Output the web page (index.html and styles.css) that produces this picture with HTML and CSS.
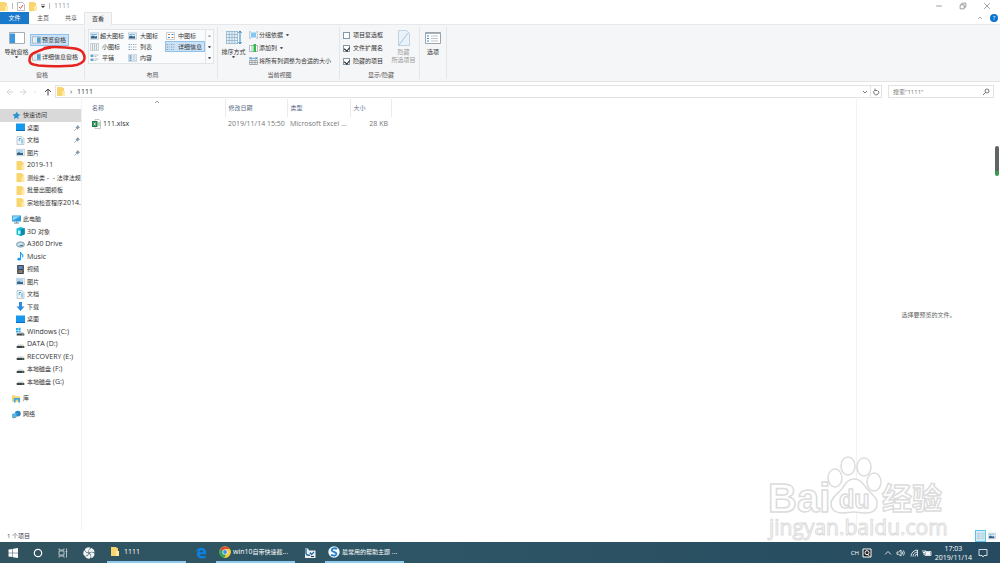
FILE: index.html
```html
<!DOCTYPE html>
<html lang="zh-CN">
<head>
<meta charset="utf-8">
<title>1111</title>
<link rel="stylesheet" href="styles.css">
</head>
<body>
<svg class="defs" aria-hidden="true">
  <symbol id="folder" viewBox="0 0 8 9"><path d="M0 0h5l1 1h1v8H0z" fill="#f9d56f"/><path d="M5 4h3v5H5z" fill="#ffe9a6"/></symbol>
  <symbol id="star" viewBox="0 0 10 10"><path d="M5.500.5l1 2.700 3 .8-2.500 1.800.3 3.200L5 7.400 2 9l.8-3L.5 4l3.200-.6z" fill="#2b93d6"/></symbol>
  <symbol id="desktop" viewBox="0 0 9 8"><path d="M0 0h9v7.500H0z" fill="#1698ee"/><path d="M0 6.500h9v1H0z" fill="#0d6fc0"/></symbol>
  <symbol id="doc" viewBox="0 0 9 9"><path d="M1 .5h5l2 2v6H1z" fill="#eef3f7" stroke="#9fb0bd" stroke-width=".6"/><path d="M3 2.500h2l1 1v4M3.200 3v2" fill="none" stroke="#4aa7d8"/></symbol>
  <symbol id="pic" viewBox="0 0 9 8"><path d="M.3.8h8.400v6.400H.3z" fill="#e4eff7" stroke="#a9b9c6" stroke-width=".6"/><path d="M1 4.500l2-1 2 1 2-.5v2.500H1z" fill="#36648c"/><path d="M1 2h6v1H1z" fill="#77bdea"/></symbol>
  <symbol id="pc" viewBox="0 0 9 9"><path d="M0 .5h9v6H0z" fill="#2b9ce0"/><path d="M.7 1.200h7.600L.7 5.800z" fill="#8bd3f8"/><path d="M2 8h5M4.500 6.500V8" stroke="#6d8796"/></symbol>
  <symbol id="cube" viewBox="0 0 9 9"><path d="M.5 1.500l4-1.500 4.200 1.200v6L4.500 9l-4-1.500z" fill="#19bdd8"/><path d="M4.500 2.500l4.200-1.300v6L4.500 9z" fill="#078ba8"/><path d="M2 3.500h2.500v3.500H2z" fill="#c5f5f8"/></symbol>
  <symbol id="cloud" viewBox="0 0 9 8"><ellipse cx="4.500" cy="4" rx="4" ry="2.700" fill="#b8ccd8" stroke="#7797aa" stroke-width=".8"/><path d="M2 4.500q2-3 5-.5" fill="none" stroke="#f1f8fc"/><path d="M4 5.500l3-1" stroke="#237eaf"/></symbol>
  <symbol id="note" viewBox="0 0 9 10"><path d="M4.500 0v7.500M4.500.5q.5 2 2.500 2.800.5 1.500-.5 2.700" fill="none" stroke="#149aef" stroke-width="1.200"/><ellipse cx="3" cy="8" rx="2" ry="1.500" fill="#149aef"/></symbol>
  <symbol id="video" viewBox="0 0 9 9"><path d="M1 0h7v9H1z" fill="#39414c"/><path d="M2.500 1h4v3h-4z" fill="#5d8ac5"/><path d="M2.500 5h4v3h-4z" fill="#8a7b6c"/><path d="M1.700 0v9M7.300 0v9" stroke="#ddd" stroke-width=".5" stroke-dasharray=".7 .7"/></symbol>
  <symbol id="down" viewBox="0 0 9 9"><path d="M3 0h3v4.500h2.500l-4 4.500-4-4.500H3z" fill="#318bdb"/></symbol>
  <symbol id="disk" viewBox="0 0 9 9"><path d="M2 4.500h5L8.300 6H.7z" fill="#c9cdcf"/><path d="M.7 6h7.600v2H.7z" fill="#3c4244"/><path d="M6 7h1.500" stroke="#58c26a" stroke-width=".8"/></symbol>
  <symbol id="win" viewBox="0 0 9 9"><path d="M0 1h2v2H0zM2.400.7h2.200V3H2.400zM0 3.400h2v2H0zM2.400 3.400h2.200v2.200H2.400z" fill="#28aee8"/><path d="M3 5h4l1.300 1.500H1.500z" fill="#c9cdcf"/><path d="M.7 6.500h7.600v2H.7z" fill="#3c4244"/><path d="M6 7.500h1.500" stroke="#58c26a" stroke-width=".8"/></symbol>
  <symbol id="lib" viewBox="0 0 10 9"><path d="M0 1h3l1 1h5v6H0z" fill="#f8d371"/><path d="M2 4h7v5H7V6H4v3H2z" fill="#3ea9dc"/></symbol>
  <symbol id="net" viewBox="0 0 10 9"><circle cx="6.500" cy="3.500" r="3.300" fill="#2b87c3"/><path d="M0 4l5-1.500v4L0 8z" fill="#58b5e8"/><path d="M1 8.300L5 7" stroke="#3e6682"/></symbol>
  <symbol id="pin" viewBox="0 0 6 6"><path d="M3.500 0L6 2.500 4.800 3 3.500 4.500 1.500 2.500 3 1.200z" fill="#8499a8"/><path d="M2.500 3.500L.3 5.700" stroke="#8499a8" stroke-width=".8"/></symbol>
  <symbol id="pane" viewBox="0 0 9 8"><path d="M.4.9h8.200v6.200H.4z" fill="#fff" stroke="#8d99a1" stroke-width=".7"/><path d="M1.500 3h3M1.500 5h3" stroke="#9cb5c4" stroke-width=".6"/><path d="M5 1.300h3.200v5.400H5z" fill="#4ba0dc"/></symbol>
  <symbol id="navpane" viewBox="0 0 16 12"><path d="M.5.500h15v11H.5z" fill="#fff" stroke="#909ba2" stroke-width=".8"/><path d="M1 1.500h5v9.500H1z" fill="#3a98e0"/></symbol>
  <symbol id="grid" viewBox="0 0 9 8"><path d="M.5.500h8v7h-8z" fill="#eef1f3" stroke="#b0b9bf" stroke-width=".6"/><path d="M2 2h1M4 2h1M6 2h1M2 4h1M4 4h1M6 4h1M2 6h1M4 6h1M6 6h1" stroke="#6e8290" stroke-width=".8"/></symbol>
  <symbol id="list" viewBox="0 0 9 8"><path d="M.5 1.500h1.500M.5 4h1.500M.5 6.500h1.500M5 1.500h1M5 4h1M5 6.500h1" stroke="#7b9fba"/><path d="M2.500 1.500h1.500M2.500 4h1.500M2.500 6.500h1.500M6.500 1.500h2M6.500 4h2M6.500 6.500h2" stroke="#a6aeb4" stroke-width=".8"/></symbol>
  <symbol id="mid" viewBox="0 0 9 8"><path d="M.5.500h8v7h-8z" fill="#fff" stroke="#aab4bb" stroke-width=".6"/><path d="M2 2h2v1H2zM5.500 5h2v1h-2z" fill="#d57b3a"/><path d="M5.500 2h2v1h-2zM2 5h2v1H2z" fill="#3d80b7"/></symbol>
  <symbol id="tile" viewBox="0 0 9 8"><path d="M.5.500h3v2.500h-3zM.5 4.500h3V7h-3z" fill="#6ea3c9"/><path d="M4.500 1h4M4.500 2.500h2M4.500 5h4M4.500 6.500h2" stroke="#a2abb0" stroke-width=".7"/></symbol>
  <symbol id="content" viewBox="0 0 9 8"><path d="M.5.300h8v7.400h-8z" fill="#edf4fa" stroke="#9fb6c8" stroke-width=".5"/><path d="M1.500 1.200h2v1.500h-2zM1.500 3.300h2v1.500h-2zM1.500 5.400h2v1.500h-2z" fill="#5f95c4"/><path d="M4.500 2h3M4.500 4h3M4.500 6h3" stroke="#a2abb0" stroke-width=".7"/></symbol>
  <symbol id="sort" viewBox="0 0 16 16"><path d="M.5 1.500h11v12H.5z" fill="#e4f1f9"/><path d="M.5 1v13M3.300 1v13M6 1v13M8.700 1v13M11.500 1v13M0 1.500h12M0 4.500h12M0 7.500h12M0 10.500h12M0 13.500h12" stroke="#91b4ca" stroke-width=".8"/><path d="M14 1v13M12.500 3L14 1l1.500 2M12.500 12l1.500 2 1.500-2" fill="none" stroke="#3788c5"/></symbol>
  <symbol id="group" viewBox="0 0 9 8"><path d="M2 1.500h5v5H2z" fill="#85c6f4"/><path d="M.7 0v8M8.300 0v8M0 1h2M0 7h2M7 1h2M7 7h2" stroke="#9fb1bd" stroke-width=".6"/></symbol>
  <symbol id="addcol" viewBox="0 0 9 8"><path d="M.4 1.500h8.200v6H.4z" fill="#fff" stroke="#8d99a1" stroke-width=".7"/><path d="M3 1.500v6" stroke="#8d99a1" stroke-width=".7"/><path d="M4.500 0h2.500v8H4.500z" fill="#2fbd4b"/></symbol>
  <symbol id="fit" viewBox="0 0 9 8"><path d="M.4 3.500h8.200v4H.4zM3 3.500v4M6 3.500v4M0 5.500h9" fill="none" stroke="#7f8b93" stroke-width=".7"/><path d="M0 0v2.500M9 0v2.500M1 1.300h7M2.500.3L1 1.300l1.500 1M6.500.3L8 1.300l-1.500 1" fill="none" stroke="#3c8ec9" stroke-width=".8"/></symbol>
  <symbol id="hide" viewBox="0 0 12 16"><path d="M.5.500h8l3 3v12H.5z" fill="#e9f2fa" stroke="#b8c9d8" stroke-width=".8"/><path d="M.5 15.500l10-13" stroke="#abc3d8" stroke-width="1"/></symbol>
  <symbol id="opts" viewBox="0 0 16 12"><path d="M.5.500h15v11H.5z" fill="#fff" stroke="#909ba2" stroke-width=".9"/><path d="M1 1.500h14" stroke="#a9b1b6"/><path d="M2 4h2M2 6.500h2M2 9h2" stroke="#348bd0"/><path d="M6 4h7M6 6.500h7M6 9h7" stroke="#a4adb3" stroke-width=".7"/></symbol>
  <symbol id="excel" viewBox="0 0 9 10"><path d="M3 .5h4l1.500 1.500v7.500H3z" fill="#fff" stroke="#9aa59f" stroke-width=".6"/><path d="M6 4h2M6 6h2" stroke="#3d9a62" stroke-width=".8"/><path d="M0 2h5.500v6H0z" fill="#1c7f45"/><path d="M1.700 3.500l2 3M3.700 3.500l-2 3" stroke="#fff" stroke-width=".8"/></symbol>
</svg>

<main class="window">
  <header class="titlebar">
    <div class="quick">
      <svg class="i8"><use href="#folder"/></svg><i class="bar"></i>
      <svg class="i8" viewBox="0 0 8 9"><path d="M.5.500h5l2 2v6h-7z" fill="#fff" stroke="#9aa2a8" stroke-width=".7"/><path d="M2 5l1.500 1.500L6 3" fill="none" stroke="#e2532d"/></svg>
      <svg class="i8"><use href="#folder"/></svg>
      <svg class="more" viewBox="0 0 5 6"><path d="M0 1.500h5" stroke="#444" stroke-width=".8"/><path d="M0 3h5L2.500 5.500z" fill="#333"/></svg><i class="bar"></i>
      <h1 class="title">1111</h1>
    </div>
    <div class="controls">
      <button aria-label="最小化"><svg viewBox="0 0 7 7"><path d="M1 3.500h5"/></svg></button>
      <button aria-label="还原"><svg viewBox="0 0 7 7"><path d="M1 2.500h3.500V6H1zM2.500 2.500V1H6v3.500H4.500"/></svg></button>
      <button aria-label="关闭"><svg viewBox="0 0 7 7"><path d="M1 1l5 5M6 1L1 6"/></svg></button>
    </div>
  </header>
  <nav class="tabs">
    <button class="tab file">文件</button><button class="tab">主页</button><button class="tab">共享</button><button class="tab current">查看</button>
    <div class="help"><svg class="chev" viewBox="0 0 6 4"><path d="M1 3l2-2 2 2"/></svg><button class="qmark" aria-label="帮助">?</button></div>
  </nav>

  <section class="ribbon">
    <div class="group g-pane">
      <div class="tools">
        <button class="big"><svg class="wide"><use href="#navpane"/></svg><span>导航窗格</span><span class="drop"></span></button>
        <div class="panes">
          <button class="tool on"><svg class="i9"><use href="#pane"/></svg>预览窗格</button>
          <button class="tool"><svg class="i9"><use href="#pane"/></svg>详细信息窗格</button>
          <svg class="mark" viewBox="0 0 60 24" aria-hidden="true"><path d="M24 2.500C17 3 13 5.500 8 7.500 4 9 2.500 11 2.500 15c0 4 3 4.500 9 5.500 9 1 18 1 27 .5 9 0 15-1 18-5 2-3 1-6-1-9-3-4-10-4-17-4.500-7-.5-15-1-21 .5" fill="none" stroke="#e6231f" stroke-width="2.500" stroke-linecap="round" stroke-linejoin="round"/></svg>
        </div>
      </div>
      <h2>窗格</h2>
    </div>
    <div class="group g-layout">
      <div class="gallery">
        <button class="tool"><svg class="i9"><use href="#pic"/></svg>超大图标</button>
        <button class="tool"><svg class="i9"><use href="#pic"/></svg>大图标</button>
        <button class="tool"><svg class="i9"><use href="#mid"/></svg>中图标</button>
        <button class="tool"><svg class="i9"><use href="#grid"/></svg>小图标</button>
        <button class="tool"><svg class="i9"><use href="#list"/></svg>列表</button>
        <button class="tool on"><svg class="i9"><use href="#list"/></svg>详细信息</button>
        <button class="tool"><svg class="i9"><use href="#tile"/></svg>平铺</button>
        <button class="tool"><svg class="i9"><use href="#content"/></svg>内容</button>
        <div class="spin"><span class="drop up"></span><span class="drop"></span><span class="drop"></span></div>
      </div>
      <h2>布局</h2>
    </div>
    <div class="group g-view">
      <div class="tools">
        <button class="big tall"><svg class="square"><use href="#sort"/></svg><span>排序方式</span><span class="drop"></span></button>
        <div class="stack">
          <button class="tool"><svg class="i9"><use href="#group"/></svg>分组依据<span class="drop"></span></button>
          <button class="tool"><svg class="i9"><use href="#addcol"/></svg>添加列<span class="drop"></span></button>
          <button class="tool"><svg class="i9"><use href="#fit"/></svg>将所有列调整为合适的大小</button>
        </div>
      </div>
      <h2>当前视图</h2>
    </div>
    <div class="group g-show">
      <div class="tools">
        <div class="stack">
          <label><input type="checkbox">项目复选框</label>
          <label><input type="checkbox" checked>文件扩展名</label>
          <label><input type="checkbox" checked>隐藏的项目</label>
        </div>
        <button class="big tall dim" disabled><svg class="square"><use href="#hide"/></svg><span>隐藏</span><span>所选项目</span></button>
      </div>
      <h2>显示/隐藏</h2>
    </div>
    <div class="group g-opt">
      <div class="tools"><button class="big"><svg class="wide"><use href="#opts"/></svg><span>选项</span></button></div>
    </div>
  </section>

  <div class="address">
    <div class="history">
      <svg viewBox="0 0 8 8"><path d="M7 4H1M4 1L1 4l3 3"/></svg>
      <svg viewBox="0 0 8 8"><path d="M1 4h6M4 1l3 3-3 3"/></svg>
      <svg viewBox="0 0 8 8"><path d="M3 3.500l1 1 1-1"/></svg>
      <svg class="dark" viewBox="0 0 8 8"><path d="M4 7.500V1M1 4l3-3 3 3"/></svg>
    </div>
    <div class="path">
      <svg class="i8"><use href="#folder"/></svg><span class="sep">›</span><span class="en">1111</span>
      <svg class="end" viewBox="0 0 8 8"><path d="M2 3l2 2 2-2"/></svg>
      <button class="refresh" aria-label="刷新"><svg viewBox="0 0 8 8"><path d="M5.800 2.500A2.500 2.500 0 1 1 3 2.200M3 .5v2h2"/></svg></button>
    </div>
    <div class="search">
      <input type="text" aria-label="搜索" placeholder='搜索"1111"'>
      <svg viewBox="0 0 8 8"><circle cx="5" cy="3" r="2"/><path d="M3.500 4.500L1 7"/></svg>
    </div>
  </div>

  <div class="body">
    <aside class="side">
      <div class="branch quickset">
        <a class="root sel" href="#"><svg><use href="#star"/></svg>快速访问</a>
        <a href="#"><svg><use href="#desktop"/></svg>桌面<svg class="pin"><use href="#pin"/></svg></a>
        <a href="#"><svg><use href="#doc"/></svg>文档<svg class="pin"><use href="#pin"/></svg></a>
        <a href="#"><svg><use href="#pic"/></svg>图片<svg class="pin"><use href="#pin"/></svg></a>
        <a href="#"><svg><use href="#folder"/></svg><span class="en">2019-11</span></a>
        <a href="#"><svg><use href="#folder"/></svg>测绘类<span class="en">&nbsp;-&nbsp; -&nbsp;</span>法律法规</a>
        <a href="#"><svg><use href="#folder"/></svg>批量出图模板</a>
        <a href="#"><svg><use href="#folder"/></svg>宗地检查程序<span class="en">2014.</span></a>
      </div>
      <div class="branch computer">
        <a class="root" href="#"><svg><use href="#pc"/></svg>此电脑</a>
        <a href="#"><svg><use href="#cube"/></svg><span class="en">3D&nbsp;</span>对象</a>
        <a href="#"><svg><use href="#cloud"/></svg><span class="en">A360 Drive</span></a>
        <a href="#"><svg><use href="#note"/></svg><span class="en">Music</span></a>
        <a href="#"><svg><use href="#video"/></svg>视频</a>
        <a href="#"><svg><use href="#pic"/></svg>图片</a>
        <a href="#"><svg><use href="#doc"/></svg>文档</a>
        <a href="#"><svg><use href="#down"/></svg>下载</a>
        <a href="#"><svg><use href="#desktop"/></svg>桌面</a>
        <a href="#"><svg><use href="#win"/></svg><span class="en">Windows (C:)</span></a>
        <a href="#"><svg><use href="#disk"/></svg><span class="en">DATA (D:)</span></a>
        <a href="#"><svg><use href="#disk"/></svg><span class="en">RECOVERY (E:)</span></a>
        <a href="#"><svg><use href="#disk"/></svg>本地磁盘<span class="en">&nbsp;(F:)</span></a>
        <a href="#"><svg><use href="#disk"/></svg>本地磁盘<span class="en">&nbsp;(G:)</span></a>
      </div>
      <a class="root" href="#"><svg><use href="#lib"/></svg>库</a>
      <a class="root" href="#"><svg><use href="#net"/></svg>网络</a>
    </aside>
    <section class="files">
      <table>
        <colgroup><col class="c-name"><col class="c-date"><col class="c-type"><col class="c-size"></colgroup>
        <thead><tr><th>名称<svg class="sorted" viewBox="0 0 6 4"><path d="M1 3l2-2 2 2"/></svg></th><th>修改日期</th><th>类型</th><th>大小</th></tr></thead>
        <tbody><tr><td><div class="name"><svg><use href="#excel"/></svg>111.xlsx</div></td><td>2019/11/14 15:50</td><td>Microsoft Excel ...</td><td class="num">28 KB</td></tr></tbody>
      </table>
    </section>
    <section class="preview"><p>选择要预览的文件。</p><i class="thumb"></i></section>
    <svg class="watermark" viewBox="0 0 184 86" aria-hidden="true">
      <g fill="#fff" stroke="#dcdcdc" stroke-width="1.500">
        <text class="wm-bold" x="2" y="56" font-size="40">Bai</text>
        <ellipse cx="69" cy="22" rx="7" ry="9"/><ellipse cx="82" cy="10" rx="7" ry="9"/><ellipse cx="98" cy="11" rx="7" ry="9"/><ellipse cx="108" cy="26" rx="7" ry="9"/>
        <path d="M88 23c8 0 10 7 14 11 6 6 10 9 9 15-1 6-6 8-11 8-5 0-8-1-12-1s-8 1-12 1c-6 0-11-3-11-9 0-6 5-9 10-14 4-5 6-11 13-11z"/>
        <text class="wm-bold" x="73" y="52" font-size="25">du</text>
        <text class="wm-cn" x="116" y="53" font-size="30">经验</text>
        <text class="wm-url" x="3" y="79" font-size="21">jingyan.baidu.com</text>
      </g>
    </svg>
  </div>

  <footer class="status"><span>1 个项目</span>
    <div class="modes"><button class="on" aria-label="详细信息"><svg><use href="#list"/></svg></button><button aria-label="大图标"><svg><use href="#pic"/></svg></button></div>
  </footer>
</main>

<footer class="taskbar">
  <button class="app" aria-label="开始"><svg viewBox="0 0 12 12"><path d="M1.500 2.500l4-.6v3.800h-4zM6 1.800l5-.8v4.700H6zM1.500 6.200h4V10l-4-.6zM6 6.200h5V11l-5-.8z" fill="#fff"/></svg></button>
  <button class="app" aria-label="Cortana"><svg viewBox="0 0 12 12"><circle cx="6" cy="6" r="3.700" fill="none" stroke="#fff" stroke-width="1.200"/></svg></button>
  <button class="app" aria-label="任务视图"><svg viewBox="0 0 12 12"><path d="M2 4h5v4H2zM2 1.500V3h5V1.500M2 10.500V9h5v1.500M9.500 1.500v9M8.700 4.500h1.600" fill="none" stroke="#d5dde1" stroke-width=".8"/></svg></button>
  <button class="app pinwheel" aria-label="风扇"><svg viewBox="0 0 12 12"><g fill="#f1f4f5"><path id="blade" d="M5.700 5.700Q1.800 5.500 2 2 4.500-.6 7.500.8 4.800 2.500 5.700 5.700z"/><use href="#blade" transform="rotate(72 6 6)"/><use href="#blade" transform="rotate(144 6 6)"/><use href="#blade" transform="rotate(216 6 6)"/><use href="#blade" transform="rotate(288 6 6)"/></g></svg></button>
  <button class="task"><svg class="i8"><use href="#folder"/></svg><span class="en">1111</span></button>
  <button class="app solo" aria-label="Edge"><svg viewBox="0 0 12 12"><path d="M.8 5.500C1.500 2.500 3.500.8 6.200.8c3 0 5 2.200 5 5v1.500H4.500c.2 1.500 1.500 2 3 2 1.200 0 2.300-.3 3.300-.9v2.200c-1 .6-2.300.9-3.700.9C4 11.500 2 9.800 2 7.300c0-1.700 1-3.200 2.500-4C2.800 3.500 1.500 4.300.8 5.500zM4.700 5.300H8.300C8.300 4 7.700 3.200 6.500 3.200S4.800 4 4.700 5.300z" fill="#0b83e6"/></svg></button>
  <button class="task"><svg viewBox="0 0 12 12"><circle cx="6" cy="6" r="5.700" fill="#f8ce36"/><path d="M6 6L1.100 3.200A5.700 5.700 0 0 1 10.900 3.200H6z" fill="#e24a3b"/><path d="M6 6L1.100 3.200A5.700 5.700 0 0 0 5.300 11.700L8 7.500z" fill="#31a457"/><path d="M6 3.200h4.900a5.700 5.700 0 0 1-5.600 8.500L8.300 7z" fill="#f8ce36"/><circle cx="6" cy="6" r="2.600" fill="#fff"/><circle cx="6" cy="6" r="2" fill="#438df0"/></svg><span><span class="en">win10</span>自带快速截<span class="en">...</span></span></button>
  <button class="app solo" aria-label="编辑器"><svg viewBox="0 0 12 12"><path d="M1 1.500h3l1 2h6.500v7.500H1z" fill="#edf1f4"/><path d="M2 2v4.500q1 2.500 4 1.500M6 5.500l1.500 2L10 5" fill="none" stroke="#246ba5" stroke-width="1.400"/><path d="M7 9.500h3" stroke="#333"/></svg></button>
  <button class="task"><svg viewBox="0 0 12 12"><circle cx="6" cy="6" r="5.700" fill="#f5f9fc"/><path d="M9 3C6.500 1.500 3.500 2.500 3.700 4.300 4 6 8.500 6 8.500 8 8.300 9.800 5.500 10 3 8.700" fill="none" stroke="#2080d2" stroke-width="1.800"/></svg><span>最常用的帮助主题<span class="en">&nbsp;...</span></span></button>
  <div class="tray">
    <span>CH</span>
    <svg viewBox="0 0 10 10"><path d="M1 1h8v8H1z" fill="#222" stroke="#fff"/><circle cx="5" cy="4.700" r="2" fill="none" stroke="#fff"/><path d="M5.500 6.500l2 1.500" stroke="#fff"/></svg>
    <svg class="line gap" viewBox="0 0 10 10"><path d="M2 6.500l3-3 3 3"/></svg>
    <svg class="line" viewBox="0 0 10 10"><path d="M1 4h1.500L5 2v6L2.500 6.300H1zM6 3.500q1 1.500 0 3M7.500 2.500q1.700 2.500 0 5"/></svg>
    <svg class="line" viewBox="0 0 10 10"><path d="M2 8.500A6.500 6.500 0 0 1 8.500 2M4 8.500A4.500 4.500 0 0 1 8.500 4M6 8.500A2.500 2.500 0 0 1 8.500 6M8.500 2v6.500"/></svg>
    <svg class="line" viewBox="0 0 10 10"><path d="M3 3.500h6v4H3zM1 2v2.500h2V2M2 4.500V7"/><path d="M4 4.500h4v2H4z" fill="#fff"/></svg>
    <time><span>17:03</span><span>2019/11/14</span></time>
    <svg class="line note" viewBox="0 0 10 10"><path d="M1 1.500h8v6H6L5 9 4 7.500H1z"/></svg>
  </div>
</footer>
</body>
</html>
```

FILE: styles.css
```css
* { box-sizing: border-box; }
html, body { height: 100%; }
body {
  margin: 0;
  display: flex;
  flex-direction: column;
  overflow: hidden;
  background: #fff;
  color: #333;
  font: 6px/8px "Open Sans", "Noto Sans CJK SC", sans-serif;
  white-space: nowrap;
}
button, input { font: inherit; color: inherit; border: 0; padding: 0; margin: 0; background: none; }
button { display: flex; align-items: center; white-space: nowrap; }
h1, h2, p { margin: 0; font: inherit; }
a { color: inherit; text-decoration: none; }
svg { flex: none; display: block; }
.defs { display: none; }
.en { font-size: 7px; }
.i8 { width: 8px; height: 9px; }
.i9 { width: 9px; height: 8px; }

.window { flex: 1; min-height: 0; display: flex; flex-direction: column; }
.titlebar { height: 12px; display: flex; justify-content: space-between; align-items: center; }
.quick { display: flex; align-items: center; gap: 4px; }
.bar { width: 1px; height: 6px; background: #bbb; }
.more { width: 4px; height: 6px; }
.title { font-size: 7px; color: #999; }
.controls { display: flex; gap: 16px; padding-right: 9px; }
.controls svg { width: 8px; height: 8px; fill: none; stroke: #888; stroke-width: .7; }

.tabs { height: 13px; display: flex; border-bottom: 1px solid #e6e7e8; }
.tab { width: 28px; justify-content: center; color: #555; }
.tab.file { width: 29px; background: #1979ca; color: #fff; }
.tab.current { height: 13px; background: #f5f6f7; border: 1px solid #e3e5e7; border-bottom: 0; margin-left: -1px; color: #333; }
.help { margin-left: auto; display: flex; align-items: center; gap: 7px; padding-right: 2px; }
.chev { width: 6px; height: 4px; fill: none; stroke: #888; stroke-width: .7; }
.qmark { width: 8px; height: 8px; justify-content: center; border-radius: 50%; background: #0a74cf; color: #fff; }

.ribbon { height: 57px; display: flex; background: #f5f6f7; border-bottom: 1px solid #e3e5e6; }
.group { display: flex; flex-direction: column; justify-content: space-between; margin: 2px 0; border-right: 1px solid #e4e6e8; }
.group h2 { text-align: center; color: #555; }
.g-pane { width: 85px; }
.g-layout { width: 133px; padding-left: 3px; }
.g-view { width: 122px; padding-left: 2px; }
.g-show { width: 80px; padding-left: 3px; }
.g-opt { width: 27px; }
.g-opt .tools { justify-content: center; }
.tools { display: flex; gap: 2px; }
.big { width: 27px; padding-top: 5px; flex-direction: column; align-items: center; line-height: 8px; }
.big.tall { padding-top: 3px; }
.wide { width: 16px; height: 12px; margin-bottom: 4px; }
.square { width: 16px; height: 16px; margin-bottom: 2px; }
.g-pane .big { margin-left: 3px; }
.drop { border: 1px solid transparent; border-top: 2px solid #555; border-bottom: 0; width: 3px; height: 2px; }
.drop.up { border: 1px solid transparent; border-bottom: 2px solid #aaa; border-top: 0; }
.dim { color: #999; }
.g-show .big { margin-left: 2px; }
.g-show .stack { width: 43px; }
.tool { height: 12px; gap: 3px; padding: 0 2px 0 1px; border: 1px solid transparent; }
.tool.on { background: #cbe3f8; border-color: #91c1e9; }
.panes { position: relative; width: 52px; margin-left: -2px; padding-top: 7px; display: flex; flex-direction: column; align-items: flex-start; gap: 5px; }
.panes .tool { gap: 1px; }
.mark { position: absolute; left: -3px; top: 18px; width: 60px; height: 24px; }
.gallery { display: grid; grid-template-columns: 38px 38px 40px 8px; grid-template-rows: repeat(3, 11px); margin: 2px 3px 0 0; width: 126px; border: 1px solid #e2e5e7; background: #fafbfc; }
.gallery .tool { height: 11px; padding: 0; }
.gallery .tool:first-child { gap: 1px; }
.spin { grid-column: 4; grid-row: 1 / 4; display: flex; flex-direction: column; justify-content: space-around; align-items: center; border-left: 1px solid #e2e5e7; }
.stack { display: flex; flex-direction: column; gap: 1px; padding-top: 2px; }
.g-view .stack { margin-left: -1px; }
.stack .tool { gap: 1px; padding: 0; }
.stack .tool .drop { margin-left: 2px; }
.stack label { display: flex; align-items: center; gap: 3px; height: 12px; }
input[type="checkbox"] { appearance: none; width: 7px; height: 7px; border: 1px solid #8298ab; background: #fff; position: relative; }
input[type="checkbox"]:checked::after { content: ""; position: absolute; left: 1px; top: 0; width: 3px; height: 4px; border: solid #222; border-width: 0 1px 1px 0; transform: rotate(40deg); }

.address { display: flex; padding: 3px 6px 1px 0; height: 17px; }
.address svg { fill: none; stroke: #555; stroke-width: .8; }
.address .i8 { stroke: none; }
.history { width: 55px; display: flex; align-items: center; justify-content: space-between; padding: 0 3px 0 6px; }
.history svg { width: 8px; height: 8px; stroke: #ccc; }
.history .dark { stroke: #444; stroke-width: 1; }
.path { flex: 1; display: flex; align-items: center; border: 1px solid #e3e3e3; padding-left: 1px; }
.sep { width: 12px; text-align: center; font-size: 7px; }
.end { width: 8px; height: 8px; margin-left: auto; }
.refresh { height: 100%; margin-left: 1px; padding: 0 1px; border-left: 1px solid #e3e3e3; }
.refresh svg { width: 8px; height: 8px; }
.search { width: 106px; margin-left: 6px; padding: 0 3px 0 4px; display: flex; align-items: center; border: 1px solid #e3e3e3; }
.search input { flex: 1; min-width: 0; height: 10px; outline: 0; }
.search input::placeholder { color: #777; }
.search svg { width: 8px; height: 8px; }

.body { flex: 1; min-height: 0; display: flex; position: relative; }
.side { width: 82px; padding-top: 10px; border-right: 1px solid #f2f2f2; overflow: hidden; display: flex; flex-direction: column; gap: 4px; }
.branch { display: grid; grid-auto-rows: 1fr; }
.quickset { height: 100px; }
.computer { height: 175px; }
.side a { display: flex; align-items: center; padding-left: 16px; min-height: 12px; }
.side a svg { width: 9px; height: 9px; margin-right: 2px; }
.side .root { padding-left: 12px; }
.side .sel { background: #d9d9d9; }
.side a .pin { width: 6px; height: 6px; margin: 0 1px 0 auto; }
.files { flex: 1; font-size: 7px; }
table { width: 309px; table-layout: fixed; border-collapse: collapse; }
.c-name { width: 143px; }
.c-date { width: 62px; }
.c-type { width: 63px; }
.c-size { width: 41px; }
th, td { text-align: left; font-weight: normal; padding: 0 0 0 3px; height: 14px; color: #777; }
th { height: 18px; font-size: 6px; color: #5b6b85; border-right: 1px solid #ebebeb; position: relative; }
th:first-child, td:first-child { padding-left: 10px; }
td.num { text-align: right; padding-right: 3px; }
.sorted { position: absolute; left: 72px; top: 1px; width: 6px; height: 4px; fill: none; stroke: #777; stroke-width: .7; }
.name { display: flex; align-items: center; gap: 2px; color: #333; }
.name svg { width: 9px; height: 10px; }
.preview { width: 144px; display: flex; align-items: center; justify-content: center; border-left: 1px solid #f2f2f2; color: #666; position: relative; }
.thumb { position: absolute; right: 1px; top: 47px; width: 4px; height: 30px; border-radius: 2px; background: linear-gradient(#606463 85%, #3a9a50 85%); }
.watermark { position: absolute; right: 50px; bottom: -12px; width: 184px; height: 86px; }
.wm-bold { font-family: "Liberation Sans", sans-serif; font-weight: bold; }
.wm-cn { font-family: "Noto Sans CJK SC", sans-serif; font-weight: bold; }
.wm-url { font-family: "Open Sans", sans-serif; stroke-width: 1px; }

.status { height: 12px; display: flex; align-items: center; justify-content: space-between; padding: 0 3px 0 7px; color: #445; }
.modes { display: flex; position: relative; }
.modes button { width: 11px; height: 12px; justify-content: center; }
.modes .on { background: #d2edfa; border: 1px solid #62c2ea; }
.modes svg { width: 8px; height: 8px; }

.taskbar { height: 21px; display: flex; background: linear-gradient(90deg, #30535f, #2e5565 40%, #264b60); color: #fff; }
.app { width: 25px; justify-content: center; }
.app svg, .task svg { width: 12px; height: 12px; }
.pinwheel { width: 28px; margin-right: 4px; }
.task { width: 79px; gap: 2px; padding-left: 3px; border-bottom: 2px solid #8ec9ee; }
.task .i8 { width: 10px; height: 9px; margin-right: 2px; }
.solo { width: 30px; }
.tray { margin-left: auto; display: flex; align-items: center; gap: 3px; padding-right: 12px; }
.tray svg { width: 10px; height: 10px; }
.tray .line { fill: none; stroke: #fff; stroke-width: .8; }
.tray .gap { margin-left: 8px; }
time { display: flex; flex-direction: column; align-items: center; line-height: 9px; font-size: 7px; margin: 0 3px 0 0; }
```
